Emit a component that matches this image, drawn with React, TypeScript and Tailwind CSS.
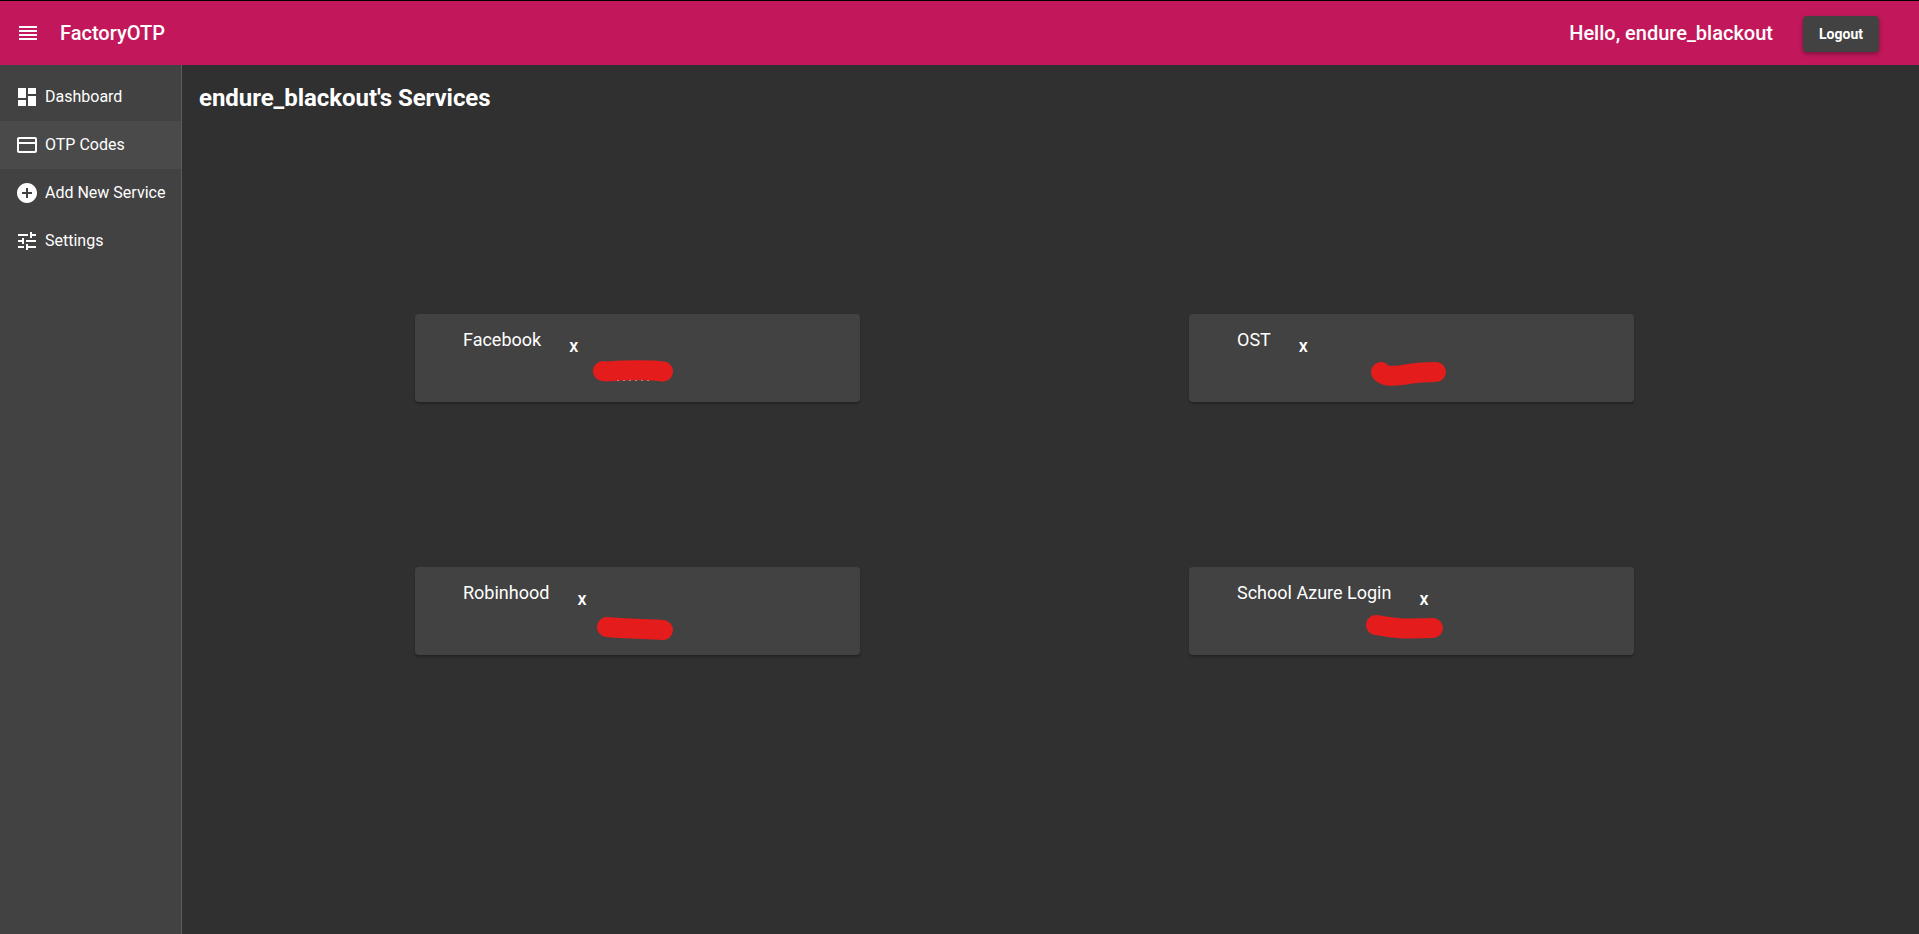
const R = "font-['Roboto',sans-serif]";

function Icon({ d }: { d: string }) {
  return (
    <svg viewBox="0 0 24 24" className="h-6 w-6 shrink-0" fill="#ffffff">
      <path d={d} />
    </svg>
  );
}

const nav = [
  { label: "Dashboard", active: false, d: "M3 13h8V3H3v10zm0 8h8v-6H3v6zm10 0h8V11h-8v10zm0-18v6h8V3h-8z" },
  { label: "OTP Codes", active: true, d: "M20 4H4c-1.11 0-1.99.89-1.99 2L2 18c0 1.11.89 2 2 2h16c1.11 0 2-.89 2-2V6c0-1.11-.89-2-2-2zm0 14H4v-7h16v7zm0-9H4V6h16v3z" },
  { label: "Add New Service", active: false, d: "M12 2C6.48 2 2 6.48 2 12s4.48 10 10 10 10-4.48 10-10S17.52 2 12 2zm5 11h-4v4h-2v-4H7v-2h4V7h2v4h4v2z" },
  { label: "Settings", active: false, d: "M3 17v2h6v-2H3zM3 5v2h10V5H3zm10 16v-2h8v-2h-8v-2h-2v6h2zM7 9v2H3v2h4v2h2V9H7zm14 4v-2H11v2h10zm-6-4h2V7h4V5h-4V3h-2v6z" },
];

const cards = [
  { name: "Facebook", scribble: "M10 11 C 12 12, 16 11, 30 10.5 C 45 10, 60 10, 70 11.5", box: "left-[178px] top-[46px]", specks: true },
  { name: "OST", scribble: "M10 12 C 14 17, 22 16, 32 15 C 42 13, 52 12, 65 12", box: "left-[182px] top-[46px]", specks: false },
  { name: "Robinhood", scribble: "M10 14 C 25 15.5, 50 16, 66 17", box: "left-[182px] top-[46px]", specks: false },
  { name: "School Azure Login", scribble: "M10 12 C 18 13, 30 15.5, 42 15.5 C 50 15.5, 58 15, 67 15", box: "left-[177px] top-[46px]", specks: false },
];

function Card({ c }: { c: (typeof cards)[number] }) {
  return (
    <div className="relative h-[88px] w-[444.5px] rounded bg-[#424242] pl-12 pt-[13px] text-white shadow-[0_2px_2px_rgba(0,0,0,0.25)]">
      <div className="flex items-start">
        <span className="text-[18px] leading-[26px]">{c.name}</span>
        <span className="ml-[28px] mt-[7px] text-[18px] font-medium leading-[24px]">x</span>
      </div>
      <svg viewBox="0 0 80 30" className={`absolute h-[30px] w-[80px] ${c.box}`} fill="none">
        <path d={c.scribble} stroke="#e51c1c" strokeWidth="20" strokeLinecap="round" />
        {c.specks && <path d="M24 20.5h2M30 20.5h2M36 20.5h2M42 20.5h2M48 20.5h2M54 20.5h2" stroke="#ffffff" strokeOpacity="0.4" strokeWidth="1" />}
      </svg>
    </div>
  );
}

export default function App() {
  return (
    <div className={`flex h-[934px] w-[1919px] flex-col overflow-hidden bg-[#303030] ${R}`}>
      <header className="flex h-[65px] shrink-0 items-center border-t border-black bg-[#c2185b] pl-4 pr-[40px] text-white">
        <Icon d="M3 15h18v-2H3v2zm0 4h18v-2H3v2zm0-8h18V9H3v2zm0-6v2h18V5H3z" />
        <span className="ml-5 text-[20px] font-medium">FactoryOTP</span>
        <span className="ml-auto text-[20px] font-medium">Hello, endure_blackout</span>
        <button className="ml-[30px] mt-[2px] h-9 w-[76px] rounded bg-[#424242] text-[14px] font-bold text-white shadow-[0_2px_4px_rgba(0,0,0,0.35)]">
          Logout
        </button>
      </header>
      <div className="flex min-h-0 flex-1">
        <aside className="w-[182px] shrink-0 border-r border-[#5c5c5c] bg-[#424242] pt-2">
          {nav.map((n) => (
            <div key={n.label} className={`flex h-12 items-center pl-[15px] text-[16px] text-white ${n.active ? "bg-[#4a4a4a]" : ""}`}>
              <Icon d={n.d} />
              <span className="ml-[6px]">{n.label}</span>
            </div>
          ))}
        </aside>
        <main className="flex-1 pl-[17px] pt-[17px]">
          <h1 className="text-[24px] font-bold leading-8 tracking-[-0.05px] text-white">endure_blackout's Services</h1>
          <div className="ml-[216px] mt-[200px] grid w-[1219px] grid-cols-[774px_445px] grid-rows-[253px_88px]">
            {cards.map((c) => (
              <Card key={c.name} c={c} />
            ))}
          </div>
        </main>
      </div>
    </div>
  );
}
